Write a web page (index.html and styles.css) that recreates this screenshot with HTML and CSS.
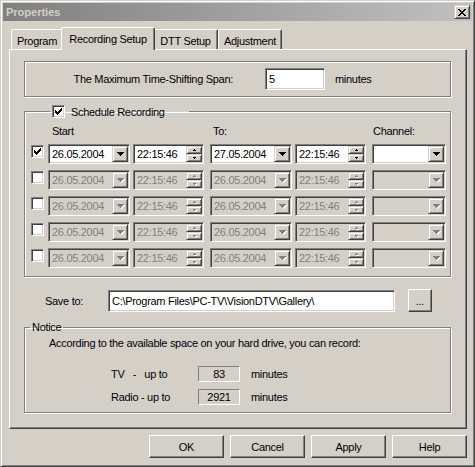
FILE: index.html
```html
<!DOCTYPE html>
<html>
<head>
<meta charset="utf-8">
<title>Properties</title>
<link rel="stylesheet" href="styles.css">
</head>
<body>
<div class="window">
	<div class="titlebar">
		<span class="title">Properties</span>
		<span class="close raised-sm"><svg width="8" height="7" shape-rendering="crispEdges"><path d="M0 0h2v1H0zM6 0h2v1H6zM1 1h2v1H1zM5 1h2v1H5zM2 2h4v1H2zM3 3h2v1H3zM2 4h4v1H2zM1 5h2v1H1zM5 5h2v1H5zM0 6h2v1H0zM6 6h2v1H6z"/></svg></span>
	</div>
	<div class="body">
		<ul class="tabs">
			<li class="tab t-prog">Program</li>
			<li class="tab t-rec sel">Recording Setup</li>
			<li class="tab t-dtt">DTT Setup</li>
			<li class="tab t-adj">Adjustment</li>
		</ul>
		<div class="panel">
			<!-- time shifting -->
			<div class="etched span-box">
				<span class="span-label"><span>The Maximum Time-Shifting Span:</span></span>
				<span class="field span-input">5</span>
				<span class="unit">minutes</span>
			</div>

			<!-- schedule -->
			<fieldset class="etched sched">
				<legend class="sched-legend">
					<span class="chk"><svg width="7" height="7" shape-rendering="crispEdges"><path d="M6 0h1v1H6zM5 1h2v1H5zM0 2h1v1H0zM4 2h3v1H4zM0 3h2v1H0zM3 3h3v1H3zM0 4h5v1H0zM1 5h3v1H1zM2 6h1v1H2z"/></svg></span>
					<span class="legend-text">Schedule Recording</span>
				</legend>
				<div class="head">
					<span class="h-start">Start</span>
					<span class="h-to">To:</span>
					<span>Channel:</span>
				</div>
				<div class="row">
					<span class="chk"><svg width="7" height="7" shape-rendering="crispEdges"><path d="M6 0h1v1H6zM5 1h2v1H5zM0 2h1v1H0zM4 2h3v1H4zM0 3h2v1H0zM3 3h3v1H3zM0 4h5v1H0zM1 5h3v1H1zM2 6h1v1H2z"/></svg></span>
					<span class="field combo date"><span class="val">26.05.2004</span><span class="dd"><i class="arr"></i></span></span>
					<span class="field time"><span class="val">22:15:46</span><span class="ud"><span class="ub"><i class="up"></i></span><span class="ub"><i class="dn"></i></span></span></span>
					<span class="field combo date wide"><span class="val">27.05.2004</span><span class="dd"><i class="arr"></i></span></span>
					<span class="field time"><span class="val">22:15:46</span><span class="ud"><span class="ub"><i class="up"></i></span><span class="ub"><i class="dn"></i></span></span></span>
					<span class="field combo chan"><span class="val"></span><span class="dd"><i class="arr"></i></span></span>
				</div>
				<div class="row dis">
					<span class="chk"></span>
					<span class="field combo date"><span class="val">26.05.2004</span><span class="dd"><i class="arr"></i></span></span>
					<span class="field time"><span class="val">22:15:46</span><span class="ud"><span class="ub"><i class="up"></i></span><span class="ub"><i class="dn"></i></span></span></span>
					<span class="field combo date wide"><span class="val">26.05.2004</span><span class="dd"><i class="arr"></i></span></span>
					<span class="field time"><span class="val">22:15:46</span><span class="ud"><span class="ub"><i class="up"></i></span><span class="ub"><i class="dn"></i></span></span></span>
					<span class="field combo chan"><span class="val"></span><span class="dd"><i class="arr"></i></span></span>
				</div>
				<div class="row dis">
					<span class="chk"></span>
					<span class="field combo date"><span class="val">26.05.2004</span><span class="dd"><i class="arr"></i></span></span>
					<span class="field time"><span class="val">22:15:46</span><span class="ud"><span class="ub"><i class="up"></i></span><span class="ub"><i class="dn"></i></span></span></span>
					<span class="field combo date wide"><span class="val">26.05.2004</span><span class="dd"><i class="arr"></i></span></span>
					<span class="field time"><span class="val">22:15:46</span><span class="ud"><span class="ub"><i class="up"></i></span><span class="ub"><i class="dn"></i></span></span></span>
					<span class="field combo chan"><span class="val"></span><span class="dd"><i class="arr"></i></span></span>
				</div>
				<div class="row dis">
					<span class="chk"></span>
					<span class="field combo date"><span class="val">26.05.2004</span><span class="dd"><i class="arr"></i></span></span>
					<span class="field time"><span class="val">22:15:46</span><span class="ud"><span class="ub"><i class="up"></i></span><span class="ub"><i class="dn"></i></span></span></span>
					<span class="field combo date wide"><span class="val">26.05.2004</span><span class="dd"><i class="arr"></i></span></span>
					<span class="field time"><span class="val">22:15:46</span><span class="ud"><span class="ub"><i class="up"></i></span><span class="ub"><i class="dn"></i></span></span></span>
					<span class="field combo chan"><span class="val"></span><span class="dd"><i class="arr"></i></span></span>
				</div>
				<div class="row dis">
					<span class="chk"></span>
					<span class="field combo date"><span class="val">26.05.2004</span><span class="dd"><i class="arr"></i></span></span>
					<span class="field time"><span class="val">22:15:46</span><span class="ud"><span class="ub"><i class="up"></i></span><span class="ub"><i class="dn"></i></span></span></span>
					<span class="field combo date wide"><span class="val">26.05.2004</span><span class="dd"><i class="arr"></i></span></span>
					<span class="field time"><span class="val">22:15:46</span><span class="ud"><span class="ub"><i class="up"></i></span><span class="ub"><i class="dn"></i></span></span></span>
					<span class="field combo chan"><span class="val"></span><span class="dd"><i class="arr"></i></span></span>
				</div>
			</fieldset>

			<!-- save to -->
			<div class="save">
				<span class="save-label">Save to:</span>
				<span class="field save-input">C:\Program Files\PC-TV\VisionDTV\Gallery\</span>
				<span class="btn browse">...</span>
			</div>

			<!-- notice -->
			<fieldset class="etched notice">
				<legend class="notice-legend">Notice</legend>
				<p class="notice-text">According to the available space on your hard drive, you can record:</p>
				<div class="cap cap-tv">
					<span class="cap-label">TV&nbsp;&nbsp;&nbsp;-&nbsp;&nbsp;&nbsp;up to</span>
					<span class="static">83</span>
					<span class="unit">minutes</span>
				</div>
				<div class="cap cap-radio">
					<span class="cap-label">Radio - up to</span>
					<span class="static">2921</span>
					<span class="unit">minutes</span>
				</div>
			</fieldset>
		</div>
		<div class="buttons">
			<span class="btn">OK</span>
			<span class="btn">Cancel</span>
			<span class="btn">Apply</span>
			<span class="btn">Help</span>
		</div>
	</div>
</div>
</body>
</html>
```
FILE: styles.css
```css
*{margin:0;padding:0;box-sizing:border-box;list-style:none;}
body{background:#d4d0c8;font:11px "Liberation Sans",Arial,sans-serif;letter-spacing:-0.3px;color:#000;}

.window{width:475px;height:467px;padding:2px;background:#d4d0c8;border:1px solid;border-color:#d4d0c8 #404040 #404040 #d4d0c8;box-shadow:inset 1px 1px 0 #fff,inset -1px -1px 0 #808080;}
.titlebar{height:18px;display:flex;align-items:center;justify-content:space-between;padding:0 2px 0 3px;background:linear-gradient(to right,#808080,#c0c0c0);}
.title{color:#d4d0c8;font-weight:bold;letter-spacing:0;}
.close{width:16px;height:14px;display:flex;align-items:center;justify-content:center;}
.raised-sm{background:#d4d0c8;border:1px solid;border-color:#d4d0c8 #404040 #404040 #d4d0c8;box-shadow:inset 1px 1px 0 #fff,inset -1px -1px 0 #808080;}

.body{padding:6px 0 0 6px;}

/* tabs */
.tabs{display:flex;align-items:flex-end;height:22px;padding-left:2px;}
.tab{height:20px;padding-top:2px;line-height:18px;text-align:center;border:1px solid;border-bottom:0;border-color:#fff #404040 transparent #fff;border-radius:2px 2px 0 0;box-shadow:inset -1px 0 0 #808080;background:#d4d0c8;}
.t-prog{width:52px;}
.t-rec{width:90px;}
.t-dtt{width:65px;}
.t-adj{width:64px;}
.tab.sel{width:94px;height:23px;margin:0 -2px -1px;position:relative;z-index:1;}

.panel{width:458px;height:380px;padding:11px 14px 0;border:1px solid;border-color:#fff #404040 #404040 #fff;box-shadow:inset -1px -1px 0 #808080;}

/* etched group */
.etched{width:427px;border:1px solid #808080;box-shadow:1px 1px 0 #fff,inset 1px 1px 0 #fff;}

/* sunken edit */
.field{display:flex;align-items:center;height:20px;padding-left:3px;background:#fff;border:1px solid;border-color:#808080 #fff #fff #808080;box-shadow:inset 1px 1px 0 #404040,inset -1px -1px 0 #d4d0c8;white-space:nowrap;overflow:hidden;}
.field .val{flex:1;}

.span-box{height:36px;display:flex;align-items:center;padding-left:48px;}
.span-label{width:160px;display:flex;justify-content:flex-end;white-space:nowrap;}
.span-input{width:60px;height:22px;margin-left:32px;}
.unit{margin-left:10px;}

/* schedule */
.sched{margin-top:7px;padding:0 0 8px 6px;}
.sched-legend{display:flex;align-items:center;width:139px;height:15px;margin-left:19px;padding-left:2px;}
.legend-text{margin-left:6px;}
.chk{width:13px;height:13px;display:flex;align-items:center;justify-content:center;background:#fff;border:1px solid;border-color:#808080 #fff #fff #808080;box-shadow:inset 1px 1px 0 #404040,inset -1px -1px 0 #d4d0c8;}
.head{display:flex;line-height:14px;margin:5px 0 6px;padding-left:21px;}
.h-start{width:161px;}
.h-to{width:160px;}
.row{display:flex;align-items:flex-start;height:20px;margin-bottom:6px;}
.row:last-child{margin-bottom:0;}
.row .chk{margin-top:1px;}
.date{width:82px;margin-left:4px;padding-right:1px;}
.date.wide{margin-left:6px;}
.time{width:71px;margin-left:3px;padding-right:1px;}
.chan{width:74px;margin-left:6px;padding-right:1px;}
.dd{width:16px;height:16px;display:flex;align-items:center;justify-content:center;background:#d4d0c8;border:1px solid;border-color:#d4d0c8 #404040 #404040 #d4d0c8;box-shadow:inset 1px 1px 0 #fff,inset -1px -1px 0 #808080;}
.ud{width:16px;height:16px;display:flex;flex-direction:column;}
.ub{flex:1;display:flex;align-items:center;justify-content:center;background:#d4d0c8;border:1px solid;border-color:#d4d0c8 #404040 #404040 #d4d0c8;box-shadow:inset 1px 1px 0 #fff,inset -1px -1px 0 #808080;}

.arr,.up,.dn{display:block;--c:#000;}
.arr{width:7px;height:4px;background:
	linear-gradient(var(--c),var(--c)) 0 0/7px 1px no-repeat,
	linear-gradient(var(--c),var(--c)) 1px 1px/5px 1px no-repeat,
	linear-gradient(var(--c),var(--c)) 2px 2px/3px 1px no-repeat,
	linear-gradient(var(--c),var(--c)) 3px 3px/1px 1px no-repeat;}
.up{width:3px;height:2px;background:
	linear-gradient(var(--c),var(--c)) 1px 0/1px 1px no-repeat,
	linear-gradient(var(--c),var(--c)) 0 1px/3px 1px no-repeat;}
.dn{width:3px;height:2px;background:
	linear-gradient(var(--c),var(--c)) 0 0/3px 1px no-repeat,
	linear-gradient(var(--c),var(--c)) 1px 1px/1px 1px no-repeat;}

.dis .field{background:#d4d0c8;color:#808080;}
.dis .arr,.dis .up,.dis .dn{--c:#808080;filter:drop-shadow(1px 1px 0 #fff);}

/* save to */
.save{display:flex;align-items:center;margin-top:12px;padding-left:21px;}
.save-label{width:63px;}
.save-input{width:287px;height:22px;}
.browse{width:24px;height:23px;margin-left:13px;}

/* notice */
.notice{margin-top:8px;padding:0 0 7px 5px;}
.notice-legend{height:15px;line-height:15px;padding:0 2px;}
.notice-text{margin:1px 0 0 19px;line-height:14px;}
.cap{display:flex;align-items:center;height:16px;padding-left:81px;}
.cap-tv{margin-top:16px;}
.cap-radio{margin-top:7px;}
.cap-label{width:87px;white-space:pre;}
.static{width:42px;height:16px;line-height:14px;text-align:center;border:1px solid;border-color:#808080 #fff #fff #808080;}
.cap .unit{margin-left:11px;}

/* buttons */
.btn{display:flex;align-items:center;justify-content:center;background:#d4d0c8;border:1px solid;border-color:#fff #404040 #404040 #fff;box-shadow:inset -1px -1px 0 #808080;}
.buttons{display:flex;justify-content:flex-end;gap:6px;width:458px;margin-top:6px;}
.buttons .btn{width:75px;height:23px;}
```
